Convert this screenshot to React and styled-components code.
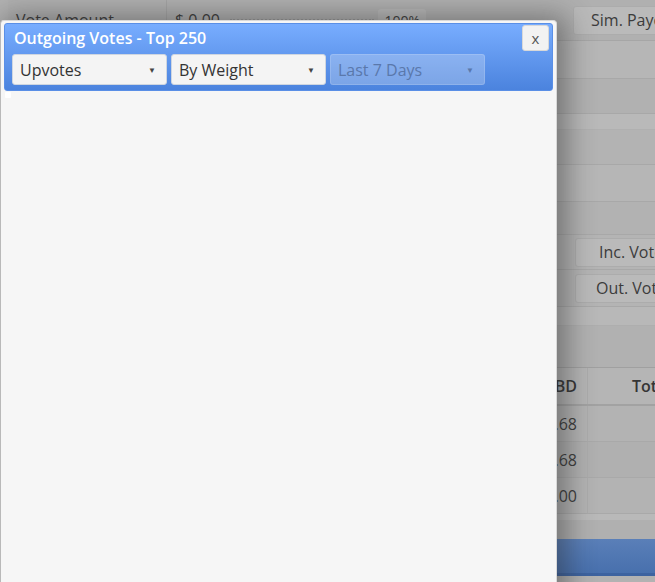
import React from 'react';
import styled, { createGlobalStyle } from 'styled-components';

const GlobalStyle = createGlobalStyle`
  html, body {
    margin: 0;
    padding: 0;
    background: #b4b4b4;
    overflow: hidden;
  }
  body {
    font-family: 'Open Sans', 'Liberation Sans', sans-serif;
  }
`;

const Page = styled.div`
  position: relative;
  width: 655px;
  height: 582px;
  overflow: hidden;
  background: #b2b2b2;
  color: #3a3a3a;
`;

const Backdrop = styled.div`
  display: flex;
  flex-direction: column;
  padding-left: 8px;
`;

const TopRow = styled.div`
  display: grid;
  grid-template-columns: 158px 260px 140px 1fr;
  height: 40px;
  align-items: center;
  background: #b0b0b0;
  border-bottom: 1px solid #a6a6a6;
`;

const Cell = styled.div`
  height: 100%;
  display: flex;
  align-items: center;
  padding-left: ${(p) => p.$pad || 8}px;
  border-left: ${(p) => (p.$line ? '1px solid #a4a4a4' : 'none')};
  font-size: 16px;
  color: #3a3a3a;
  white-space: nowrap;
  overflow: hidden;
`;

const Dots = styled.span`
  flex: 1;
  border-bottom: 2px dotted #999;
  margin: 0 4px 0 10px;
`;

const Pct = styled.span`
  background: #b8b8b8;
  padding: 2px 6px;
  border-radius: 3px;
  font-size: 14px;
`;

const GhostButton = styled.div`
  flex: none;
  box-sizing: border-box;
  background: #bababa;
  border: 1px solid #acacac;
  border-radius: 3px;
  height: 29px;
  display: flex;
  align-items: center;
  padding: 0 16px 0 17px;
  font-size: 16px;
  color: #3c3c3c;
  white-space: nowrap;
`;

const Band = styled.div`
  height: ${(p) => p.$h}px;
  background: ${(p) => p.$bg};
  border-bottom: 1px solid ${(p) => p.$line || '#a8a8a8'};
  display: flex;
  justify-content: flex-end;
  align-items: center;
  overflow: hidden;
`;

const RightBtn = styled(GhostButton)`
  width: 90px;
  margin-right: -10px;
  padding-left: ${(p) => p.$pad || 23}px;
  padding-right: 0;
`;

const TableHead = styled.div`
  display: grid;
  grid-template-columns: 1fr 60px 67px;
  height: 36px;
  align-items: center;
  background: #b5b5b5;
  border-bottom: 2px solid #a2a2a2;
  font-weight: 600;
  font-size: 16px;
  color: #353535;
`;

const TableRow = styled.div`
  display: grid;
  grid-template-columns: 1fr 60px 67px;
  height: 35px;
  align-items: center;
  background: ${(p) => (p.$alt ? '#b0b0b0' : '#b3b3b3')};
  border-bottom: 1px solid #a9a9a9;
  font-size: 16px;
  color: #3c3c3c;
`;

const Num = styled.div`
  padding-right: 10px;
  height: 100%;
  display: flex;
  align-items: center;
  justify-content: flex-end;
  border-right: 1px solid #ababab;
`;

const TotalHead = styled.div`
  padding-left: 44px;
  white-space: nowrap;
`;

const Gap = styled.div`
  height: 25px;
  background: linear-gradient(#b9b9b9 0 6px, #b0b0b0 6px);
`;

const BlueBar = styled.div`
  height: 34px;
  background: linear-gradient(#5a7fb8, #4870ad);
  border-bottom: 3px solid #3d63a0;
`;

const Dialog = styled.div`
  position: absolute;
  left: 0;
  top: 20px;
  width: 549px;
  height: 580px;
  padding: 2px 3px;
  background: #f6f6f6;
  border: 1px solid #d8d8d8;
  border-left-color: #b9b9b9;
  border-radius: 4px;
  box-shadow: 6px 0 28px 4px rgba(40, 40, 40, 0.45);
  display: flex;
  flex-direction: column;
`;

const TitleBar = styled.div`
  position: relative;
  background: linear-gradient(#78adff, #4b83de);
  border: 1px solid #5a8fe6;
  border-radius: 3px;
  padding: 3px 7px 5px 7px;
  display: flex;
  flex-direction: column;
  gap: 5px;
`;

const Title = styled.div`
  color: #fff;
  font-weight: 600;
  font-size: 16px;
  line-height: 22px;
  padding-left: 2px;
`;

const Close = styled.button`
  position: absolute;
  right: 3px;
  top: 1px;
  width: 27px;
  height: 26px;
  border: 1px solid #d8d8d8;
  border-radius: 3px;
  background: #f2f2f2;
  color: #555;
  font-family: 'Open Sans', sans-serif;
  font-size: 15px;
  line-height: 20px;
  padding: 0;
`;

const Selects = styled.div`
  display: flex;
  gap: 4px;
`;

const Select = styled.div`
  width: 155px;
  height: 31px;
  box-sizing: border-box;
  border-radius: 3px;
  border: 1px solid ${(p) => (p.$disabled ? 'rgba(255,255,255,0.15)' : '#cfd6e0')};
  background: ${(p) => (p.$disabled ? 'rgba(230,235,245,0.3)' : '#f4f4f4')};
  color: ${(p) => (p.$disabled ? '#5a78ab' : '#333')};
  display: flex;
  align-items: center;
  justify-content: space-between;
  padding: 0 10px 0 7px;
  font-size: 16px;
`;

const Caret = styled.span`
  font-size: 8px;
  color: ${(p) => (p.$disabled ? '#5a78ab' : '#444')};
`;

const Content = styled.div`
  flex: 1;
  padding: 1px 1px;
`;

const Dot = styled.div`
  width: 6px;
  height: 6px;
  background: #fff;
  border-radius: 1px;
`;

const Grip = styled.div`
  position: absolute;
  right: 2px;
  bottom: 2px;
  width: 0;
  height: 0;
  border-left: 4px solid transparent;
  border-bottom: 4px solid #888;
`;

export default function App() {
  return (
    <Page>
      <GlobalStyle />
      <Backdrop>
        <TopRow>
          <Cell $pad={8}>Vote Amount</Cell>
          <Cell $line $pad={8}>
            $ 0.00 <Dots /> <Pct>100%</Pct>
          </Cell>
          <Cell />
          <Cell $pad={7}>
            <GhostButton>Sim. Payout</GhostButton>
          </Cell>
        </TopRow>
        <Band $h={37} $bg="#b6b6b6" />
        <Band $h={34} $bg="#b1b1b1" />
        <Band $h={15} $bg="#b9b9b9" $line="#b0b0b0" />
        <Band $h={34} $bg="#b3b3b3" />
        <Band $h={36} $bg="#b6b6b6" />
        <Band $h={32} $bg="#b2b2b2" />
        <Band $h={34} $bg="#b4b4b4">
          <RightBtn>Inc. Votes</RightBtn>
        </Band>
        <Band $h={36} $bg="#b4b4b4">
          <RightBtn $pad={20}>Out. Votes</RightBtn>
        </Band>
        <Band $h={18} $bg="#b8b8b8" $line="#aeaeae" />
        <Band $h={41} $bg="#b1b1b1" $line="#a0a0a0" />
        <TableHead>
          <div />
          <Num>SBD</Num>
          <TotalHead>Total</TotalHead>
        </TableHead>
        <TableRow>
          <div />
          <Num>0.68</Num>
          <div />
        </TableRow>
        <TableRow $alt>
          <div />
          <Num>0.68</Num>
          <div />
        </TableRow>
        <TableRow>
          <div />
          <Num>0.00</Num>
          <div />
        </TableRow>
        <Gap />
        <BlueBar />
      </Backdrop>

      <Dialog>
        <TitleBar>
          <Title>Outgoing Votes - Top 250</Title>
          <Close>x</Close>
          <Selects>
            <Select>
              Upvotes <Caret>▼</Caret>
            </Select>
            <Select>
              By Weight <Caret>▼</Caret>
            </Select>
            <Select $disabled>
              Last 7 Days <Caret $disabled>▼</Caret>
            </Select>
          </Selects>
        </TitleBar>
        <Content>
          <Dot />
        </Content>
        <Grip />
      </Dialog>
    </Page>
  );
}
